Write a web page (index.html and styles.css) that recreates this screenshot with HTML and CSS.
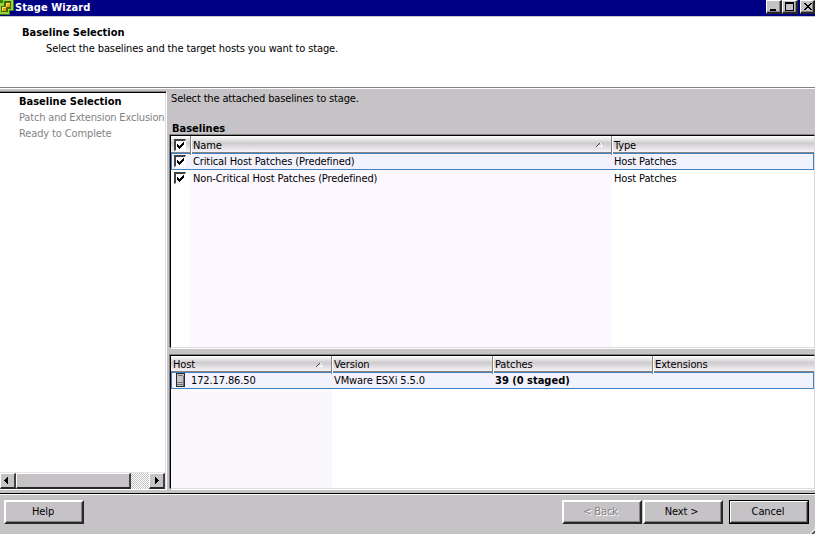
FILE: index.html
```html
<!DOCTYPE html>
<html lang="en">
<head>
<meta charset="utf-8">
<title>Stage Wizard</title>
<link rel="stylesheet" href="styles.css">
</head>
<body>
<div class="window">
  <header class="titlebar">
    <svg class="logo" width="14" height="16" viewBox="0 0 14 16" shape-rendering="crispEdges">
      <path fill="#398200" d="M0 0h14v11h-4v4H0z"/>
      <path fill="#94d342" d="M0 3h3V0h10v10H9v4H0z"/>
      <path fill="#426500" d="M4 1h7v8H8v3H1V6h3z"/>
      <path fill="#ffe37b" d="M6 3h4v4H6zM2 7h4v4H2z"/>
      <path fill="#e7a200" d="M7 4h3v3H7zM3 8h3v3H3z"/>
    </svg>
    <h1 class="caption">Stage Wizard</h1>
    <div class="controls">
      <button class="ctl" aria-label="Minimize"><svg width="14" height="12" shape-rendering="crispEdges"><path d="M3 8h6v2H3z"/></svg></button>
      <button class="ctl" aria-label="Maximize"><svg width="14" height="12" shape-rendering="crispEdges"><path fill-rule="evenodd" d="M2 1h9v9H2zM3 3v6h7V3z"/></svg></button>
      <button class="ctl close" aria-label="Close"><svg width="14" height="12" shape-rendering="crispEdges"><path d="M3 2h2v1h1v1h2V3h1V2h2v1h-1v1H9v1H8v1h1v1h1v1h1v1H9V8H8V7H6v1H5v1H3V8h1V7h1V6h1V5H5V4H4V3H3z"/></svg></button>
    </div>
  </header>
  <section class="intro">
    <h2>Baseline Selection</h2>
    <p>Select the baselines and the target hosts you want to stage.</p>
  </section>
  <main class="body">
    <nav class="steps">
      <ol>
        <li class="current">Baseline Selection</li>
        <li class="long">Patch and Extension Exclusion</li>
        <li>Ready to Complete</li>
      </ol>
      <div class="scroll">
        <span class="arrow"><svg width="12" height="12" shape-rendering="crispEdges"><path d="M3 6h1V5h1V4h1V3h1v7H6V9H5V8H4V7H3z"/></svg></span>
        <span class="thumb"></span><span class="track"></span>
        <span class="arrow"><svg width="12" height="12" shape-rendering="crispEdges"><path d="M5 3h1v1h1v1h1v1h1v1H8v1H7v1H6v1H5z"/></svg></span>
      </div>
    </nav>
    <div class="content">
      <p class="prompt">Select the attached baselines to stage.</p>
      <h3>Baselines</h3>
      <div class="list baselines">
        <div class="row head"><span><i class="box"><svg width="9" height="9" shape-rendering="crispEdges"><path d="M1 3h1v1h1v1h1V4h1V3h1V2h1V1h1v3H7v1H6v1H5v1H4v1H3V7H2V6H1z"/></svg></i></span><span>Name<svg class="sort" width="7" height="5" shape-rendering="crispEdges"><path fill="#424142" d="M0 4h1V3h1V2h1V1h1v1H3v1H2v1H1v1H0z"/><path fill="#fff" d="M4 1h1v1h1v2h1v1H1V4h4V2H4z"/></svg></span><span>Type</span></div>
        <div class="row selected"><span><i class="box"><svg width="9" height="9" shape-rendering="crispEdges"><path d="M1 3h1v1h1v1h1V4h1V3h1V2h1V1h1v3H7v1H6v1H5v1H4v1H3V7H2V6H1z"/></svg></i></span><span>Critical Host Patches (Predefined)</span><span>Host Patches</span></div>
        <div class="row"><span><i class="box"><svg width="9" height="9" shape-rendering="crispEdges"><path d="M1 3h1v1h1v1h1V4h1V3h1V2h1V1h1v3H7v1H6v1H5v1H4v1H3V7H2V6H1z"/></svg></i></span><span>Non-Critical Host Patches (Predefined)</span><span>Host Patches</span></div>
      </div>
      <div class="list hosts">
        <div class="row head"><span>Host<svg class="sort" width="7" height="5" shape-rendering="crispEdges"><path fill="#424142" d="M0 4h1V3h1V2h1V1h1v1H3v1H2v1H1v1H0z"/><path fill="#fff" d="M4 1h1v1h1v2h1v1H1V4h4V2H4z"/></svg></span><span>Version</span><span>Patches</span><span>Extensions</span></div>
        <div class="row selected"><span><svg class="server" width="9" height="14" shape-rendering="crispEdges"><path fill="#292829" d="M0 0h9v14H0z"/><path fill="#c6c3c6" d="M1 1h7v12H1z"/><path fill="#737173" d="M2 2h5v1H2zM1 9h6v1H1zM1 11h6v1H1zM7 3h1v10H7z"/></svg>172.17.86.50</span><span>VMware ESXi 5.5.0</span><span class="count">39 (0 staged)</span><span></span></div>
      </div>
    </div>
  </main>
  <footer class="actions">
    <button class="btn help">Help</button>
    <button class="btn back" disabled>&lt; Back</button>
    <button class="btn">Next &gt;</button>
    <button class="btn cancel">Cancel</button>
    <svg class="grip" width="5" height="5" viewBox="0 0 5 5"><path stroke="#fff" d="M0 5L5 0"/><path stroke="#424142" stroke-width="1.5" d="M2 5.5L5.5 2"/></svg>
  </footer>
</div>
</body>
</html>
```
FILE: styles.css
```css
* { box-sizing: border-box; }
body { margin: 0; overflow: hidden; }
h1, h2, h3, p, ol { margin: 0; padding: 0; font-size: inherit; }
svg { display: block; }
.window { width: 815px; height: 534px; display: flex; flex-direction: column; background: #c6c3c6; color: #000; font: 11px/16px "DejaVu Sans Condensed", "DejaVu Sans", sans-serif; letter-spacing: -0.12px; white-space: nowrap; }
button { font: inherit; letter-spacing: inherit; color: inherit; padding: 0; background: #c6c3c6; }
.titlebar { height: 17px; display: flex; background: #000084; border-bottom: 1px solid #c6c3c6; color: #fff; }
.caption { flex: 1; margin-left: 1px; line-height: 15px; letter-spacing: 0.08px; }
.controls { display: flex; height: 14px; }
.ctl { width: 16px; height: 14px; border: solid; border-width: 1px 2px 2px 1px; border-color: #fff #292829 #292829 #fff; box-shadow: inset -1px -1px #848284; }
.close { margin-left: 2px; width: 15px; }
.intro { height: 71px; padding: 8px 0 0 22px; background: #fff; border-bottom: 1px solid #848284; }
.intro h2, .current, h3, .count { font-weight: bold; letter-spacing: 0; }
.intro p { padding-left: 24px; }
.body { height: 406px; display: flex; border-top: 1px solid #fff; }
.steps { width: 167px; margin-top: 2px; height: 399px; display: flex; flex-direction: column; justify-content: space-between; background: #fff; border: solid; border-color: #848284 #fff #fff; border-width: 1px 1px 1px 0; box-shadow: inset 0 1px #000, inset -1px 0 #dedbde; }
.steps ol { list-style: none; padding: 2px 0 0 19px; color: #848284; }
.steps .current { color: #000; }
.long { letter-spacing: -0.17px; }
.scroll { height: 17px; width: 165px; display: flex; border-top: 1px solid #e7e3e7; }
.arrow, .thumb { background: #c6c3c6; border: solid; border-width: 1px 2px 2px 1px; border-color: #fff #424142 #292829 #fff; }
.arrow { width: 16px; }
.thumb { width: 115px; }
.track { flex: 1; background: repeating-conic-gradient(#fff 0 25%, #c6c3c6 0 50%) 0 0 / 2px 2px; }
.content { width: 645px; margin-left: 3px; display: flex; flex-direction: column; }
.prompt { padding-left: 1px; height: 30px; margin-top: 2px; letter-spacing: -0.15px; }
h3 { padding-left: 2px; height: 14px; }
.list { border: solid; border-width: 1px; border-color: #000 #dedbde #dedbde #000; box-shadow: -1px -1px #848284, 1px 1px #fff; }
.baselines { height: 213px; --cols: 19px 421px 1fr; background: linear-gradient(#fdf7ff, #fdf7ff) 19px 0 / 422px 100% no-repeat #fff; }
.hosts { height: 134px; margin-top: 7px; --cols: 160px 161px 160px 1fr; background: linear-gradient(#fbf8fd, #fbf8fd) 0 0 / 161px 100% no-repeat #fff; }
.row { display: grid; grid-template-columns: var(--cols); height: 17px; line-height: 17px; }
.row > span { padding-left: 3px; position: relative; }
.row.head > span { padding-left: 2px; }
.row.head { height: 16px; background: linear-gradient(#fff, #cecbce 45%, #f7f3f7); border-bottom: 1px solid #848284; }
.baselines .row { line-height: 18px; }
.baselines .row.head { height: 17px; line-height: 19px; }
.hosts .row { line-height: 18px; }
.baselines .head > span:first-child { padding-left: 3px; }
.head > span + span { border-left: 1px solid #848284; box-shadow: inset 1px 0 #fff; }
.selected { background: #f2f2ff; outline: 1px solid #4282bd; outline-offset: -1px; }
.box { display: block; width: 12px; height: 12px; margin-top: 2px; background: #fff; border: 1px solid #fff; border-top: 2px solid #424142; border-left: 2px solid #424142; }
.head .box { margin-top: 3px; }
.sort { position: absolute; right: 8px; top: 6px; }
.hosts .row > span:first-child { display: flex; }
.server { margin: 1px 6px 0 2px; }
.actions { flex: 1; position: relative; display: flex; padding: 5px 6px 0 4px; border-top: 1px solid #fff; box-shadow: 0 -1px #000; }
.btn { width: 80px; height: 24px; border: solid; border-width: 2px; border-color: #fff #292829 #292829 #fff; box-shadow: inset -1px -1px #848284; }
.help { margin-right: auto; padding-right: 2px; }
.back { margin-right: 1px; color: #848284; text-shadow: 1px 1px #fff; }
.btn.cancel { padding-right: 2px; margin-left: 6px; outline: 1px solid #000; outline-offset: -1px; }
.btn:not(.help):not(.cancel) { padding-right: 3px; }
.grip { position: absolute; right: 0; bottom: 0; }
```
